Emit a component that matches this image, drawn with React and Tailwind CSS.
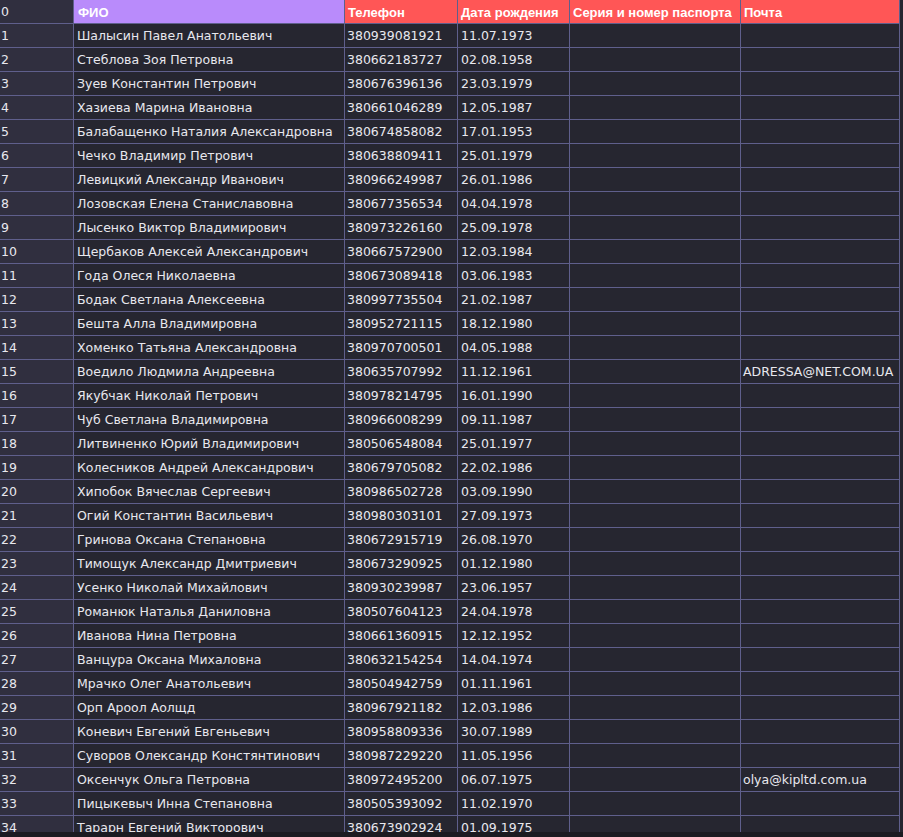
import React from 'react';

const rows = [
  ['Шалысин Павел Анатольевич', '380939081921', '11.07.1973', ''],
  ['Стеблова Зоя Петровна', '380662183727', '02.08.1958', ''],
  ['Зуев Константин Петрович', '380676396136', '23.03.1979', ''],
  ['Хазиева Марина Ивановна', '380661046289', '12.05.1987', ''],
  ['Балабащенко Наталия Александровна', '380674858082', '17.01.1953', ''],
  ['Чечко Владимир Петрович', '380638809411', '25.01.1979', ''],
  ['Левицкий Александр Иванович', '380966249987', '26.01.1986', ''],
  ['Лозовская Елена Станиславовна', '380677356534', '04.04.1978', ''],
  ['Лысенко Виктор Владимирович', '380973226160', '25.09.1978', ''],
  ['Щербаков Алексей Александрович', '380667572900', '12.03.1984', ''],
  ['Года Олеся Николаевна', '380673089418', '03.06.1983', ''],
  ['Бодак Светлана Алексеевна', '380997735504', '21.02.1987', ''],
  ['Бешта Алла Владимировна', '380952721115', '18.12.1980', ''],
  ['Хоменко Татьяна Александровна', '380970700501', '04.05.1988', ''],
  ['Воедило Людмила Андреевна', '380635707992', '11.12.1961', 'ADRESSA@NET.COM.UA'],
  ['Якубчак Николай Петрович', '380978214795', '16.01.1990', ''],
  ['Чуб Светлана Владимировна', '380966008299', '09.11.1987', ''],
  ['Литвиненко Юрий Владимирович', '380506548084', '25.01.1977', ''],
  ['Колесников Андрей Александрович', '380679705082', '22.02.1986', ''],
  ['Хипобок Вячеслав Сергеевич', '380986502728', '03.09.1990', ''],
  ['Огий Константин Васильевич', '380980303101', '27.09.1973', ''],
  ['Гринова Оксана Степановна', '380672915719', '26.08.1970', ''],
  ['Тимощук Александр Дмитриевич', '380673290925', '01.12.1980', ''],
  ['Усенко Николай Михайлович', '380930239987', '23.06.1957', ''],
  ['Романюк Наталья Даниловна', '380507604123', '24.04.1978', ''],
  ['Иванова Нина Петровна', '380661360915', '12.12.1952', ''],
  ['Ванцура Оксана Михаловна', '380632154254', '14.04.1974', ''],
  ['Мрачко Олег Анатольевич', '380504942759', '01.11.1961', ''],
  ['Орп Ароол Аолщд', '380967921182', '12.03.1986', ''],
  ['Коневич Евгений Евгеньевич', '380958809336', '30.07.1989', ''],
  ['Суворов Олександр Констянтинович', '380987229220', '11.05.1956', ''],
  ['Оксенчук Ольга Петровна', '380972495200', '06.07.1975', 'olya@kipltd.com.ua'],
  ['Пицыкевыч Инна Степановна', '380505393092', '11.02.1970', ''],
  ['Тарарн Евгений Викторович', '380673902924', '01.09.1975', ''],
];

const cell = 'h-6 pt-[2px] flex items-center border-r border-b border-[#5f5f8c] whitespace-nowrap overflow-hidden';
const head = `${cell} font-bold text-white text-[13px] font-['Liberation_Sans','Arial',sans-serif]`;

export default function App() {
  return (
    <div className="w-[903px] h-[837px] flex flex-col bg-[#262630] overflow-hidden text-[12.5px] text-[#e8e8ee] font-['DejaVu_Sans','Verdana',sans-serif]">
      <div className="flex-1 overflow-hidden">
        <div className="grid grid-cols-[74px_271px_113px_112px_171px_159px]">
          {/* header */}
          <div className={`${cell} bg-[#302f3f] pl-px`}>0</div>
          <div className={`${head} bg-[#b98bfb] pl-[4px]`}>ФИО</div>
          <div className={`${head} bg-[#ff5656] pl-[3px]`}>Телефон</div>
          <div className={`${head} bg-[#ff5656] pl-[3px]`}>Дата рождения</div>
          <div className={`${head} bg-[#ff5656] pl-[3px]`}>Серия и номер паспорта</div>
          <div className={`${head} bg-[#ff5656] pl-[3px]`}>Почта</div>

          {rows.map((r, i) => (
            <React.Fragment key={i}>
              <div className={`${cell} bg-[#302f3f] pl-px`}>{i + 1}</div>
              <div className={`${cell} pl-[3px]`}>{r[0]}</div>
              <div className={`${cell} pl-[2px]`}>{r[1]}</div>
              <div className={`${cell} pl-[3px]`}>{r[2]}</div>
              <div className={cell}></div>
              <div className={`${cell} pl-[2px]`}>{r[3]}</div>
            </React.Fragment>
          ))}
        </div>
      </div>
      {/* horizontal scroll strip */}
      <div className="h-[5px] bg-[#1b1b21] shrink-0" />
    </div>
  );
}
